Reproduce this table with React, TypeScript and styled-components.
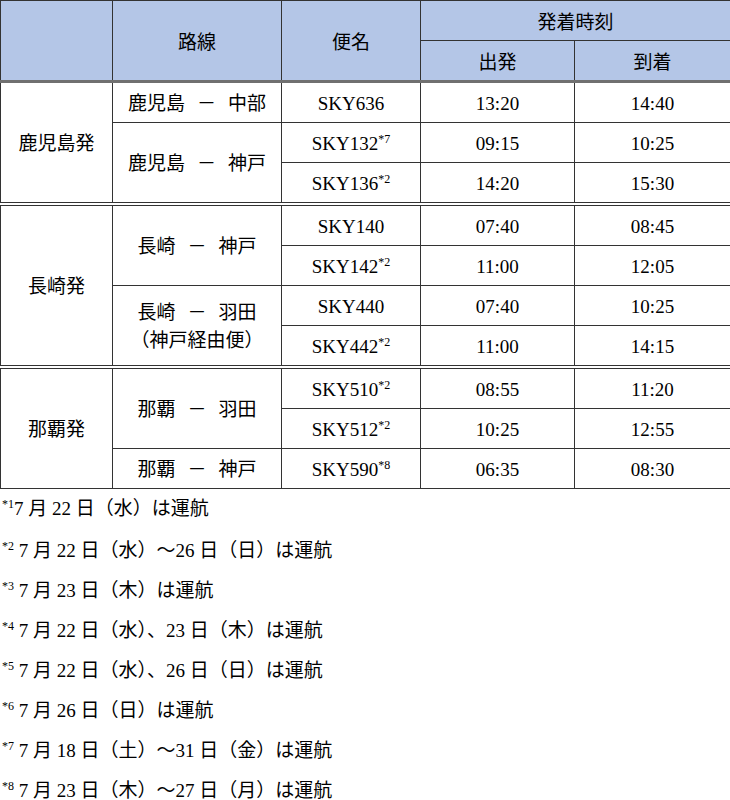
import React from 'react';
import styled, { createGlobalStyle } from 'styled-components';

const GlobalStyle = createGlobalStyle`
    body {
        margin: 0;
        background: #fff;
        color: #000;
        font-family: "Liberation Serif", "Noto Sans CJK JP", serif;
        font-size: 19px;
    }
`;

const Table = styled.table`
    width: 730px;
    table-layout: fixed;
    border-collapse: collapse;
`;

const Th = styled.th<{ $last?: boolean }>`
    height: 34px;
    padding: 5px 0 0;
    background: #b4c6e7;
    border: 1px solid #333;
    border-bottom: ${(p) => (p.$last ? '3px solid #707070' : '1px solid #333')};
    font-weight: normal;
    text-align: center;
    vertical-align: middle;
    line-height: 1.2;
`;

const Td = styled.td<{ $sep?: boolean }>`
    height: 36px;
    padding: 3px 0 0;
    border: 1px solid #333;
    border-top: ${(p) => (p.$sep ? '4px double #333' : '1px solid #333')};
    text-align: center;
    vertical-align: middle;
    line-height: 1.5;
`;

const Dash = styled.span`
    margin: 0 12px;
`;

const Sup = styled.sup`
    font-size: 12px;
    vertical-align: 7px;
    line-height: 0;
`;

const Notes = styled.div`
    padding: 0 0 0 2px;
`;

const Note = styled.div<{ $first?: boolean }>`
    height: 40px;
    line-height: 40px;
    margin-bottom: ${(p) => (p.$first ? '2px' : '0')};
    white-space: nowrap;
`;

interface Flight {
    no: string;
    note?: string;
    dep: string;
    arr: string;
}

interface Route {
    from: string;
    to: string;
    via?: string;
    flights: Flight[];
}

interface Group {
    origin: string;
    routes: Route[];
}

const groups: Group[] = [
    {
        origin: '鹿児島発',
        routes: [
            { from: '鹿児島', to: '中部', flights: [{ no: 'SKY636', dep: '13:20', arr: '14:40' }] },
            {
                from: '鹿児島',
                to: '神戸',
                flights: [
                    { no: 'SKY132', note: '*7', dep: '09:15', arr: '10:25' },
                    { no: 'SKY136', note: '*2', dep: '14:20', arr: '15:30' },
                ],
            },
        ],
    },
    {
        origin: '長崎発',
        routes: [
            {
                from: '長崎',
                to: '神戸',
                flights: [
                    { no: 'SKY140', dep: '07:40', arr: '08:45' },
                    { no: 'SKY142', note: '*2', dep: '11:00', arr: '12:05' },
                ],
            },
            {
                from: '長崎',
                to: '羽田',
                via: '（神戸経由便）',
                flights: [
                    { no: 'SKY440', dep: '07:40', arr: '10:25' },
                    { no: 'SKY442', note: '*2', dep: '11:00', arr: '14:15' },
                ],
            },
        ],
    },
    {
        origin: '那覇発',
        routes: [
            {
                from: '那覇',
                to: '羽田',
                flights: [
                    { no: 'SKY510', note: '*2', dep: '08:55', arr: '11:20' },
                    { no: 'SKY512', note: '*2', dep: '10:25', arr: '12:55' },
                ],
            },
            { from: '那覇', to: '神戸', flights: [{ no: 'SKY590', note: '*8', dep: '06:35', arr: '08:30' }] },
        ],
    },
];

const notes = [
    { mark: '*1', text: '7 月 22 日（水）は運航' },
    { mark: '*2', text: ' 7 月 22 日（水）〜26 日（日）は運航' },
    { mark: '*3', text: ' 7 月 23 日（木）は運航' },
    { mark: '*4', text: ' 7 月 22 日（水）、23 日（木）は運航' },
    { mark: '*5', text: ' 7 月 22 日（水）、26 日（日）は運航' },
    { mark: '*6', text: ' 7 月 26 日（日）は運航' },
    { mark: '*7', text: ' 7 月 18 日（土）〜31 日（金）は運航' },
    { mark: '*8', text: ' 7 月 23 日（木）〜27 日（月）は運航' },
];

const GroupRows: React.FC<{ group: Group; sep: boolean }> = ({ group, sep }) => {
    const total = group.routes.reduce((n, r) => n + r.flights.length, 0);
    let rowIndex = 0;

    return (
        <>
            {group.routes.map((route, ri) =>
                route.flights.map((flight, fi) => {
                    const first = rowIndex === 0;
                    rowIndex++;
                    return (
                        <tr key={`${group.origin}-${ri}-${fi}`}>
                            {first && (
                                <Td rowSpan={total} $sep={sep}>
                                    {group.origin}
                                </Td>
                            )}
                            {fi === 0 && (
                                <Td rowSpan={route.flights.length} $sep={sep && first}>
                                    {route.from}
                                    <Dash>－</Dash>
                                    {route.to}
                                    {route.via && (
                                        <>
                                            <br />
                                            {route.via}
                                        </>
                                    )}
                                </Td>
                            )}
                            <Td $sep={sep && first}>
                                {flight.no}
                                {flight.note && <Sup>{flight.note}</Sup>}
                            </Td>
                            <Td $sep={sep && first}>{flight.dep}</Td>
                            <Td $sep={sep && first}>{flight.arr}</Td>
                        </tr>
                    );
                }),
            )}
        </>
    );
};

const App: React.FC = () => {
    return (
        <>
            <GlobalStyle />
            <Table>
                <colgroup>
                    <col style={{ width: 112 }} />
                    <col style={{ width: 169 }} />
                    <col style={{ width: 139 }} />
                    <col style={{ width: 154 }} />
                    <col style={{ width: 156 }} />
                </colgroup>
                <thead>
                    <tr>
                        <Th rowSpan={2} $last />
                        <Th rowSpan={2} $last>
                            路線
                        </Th>
                        <Th rowSpan={2} $last>
                            便名
                        </Th>
                        <Th colSpan={2}>発着時刻</Th>
                    </tr>
                    <tr>
                        <Th $last>出発</Th>
                        <Th $last>到着</Th>
                    </tr>
                </thead>
                <tbody>
                    {groups.map((g, i) => (
                        <GroupRows key={g.origin} group={g} sep={i > 0} />
                    ))}
                </tbody>
            </Table>
            <Notes>
                {notes.map((n, i) => (
                    <Note key={n.mark} $first={i === 0}>
                        <Sup>{n.mark}</Sup>
                        {n.text}
                    </Note>
                ))}
            </Notes>
        </>
    );
};

export default App;
